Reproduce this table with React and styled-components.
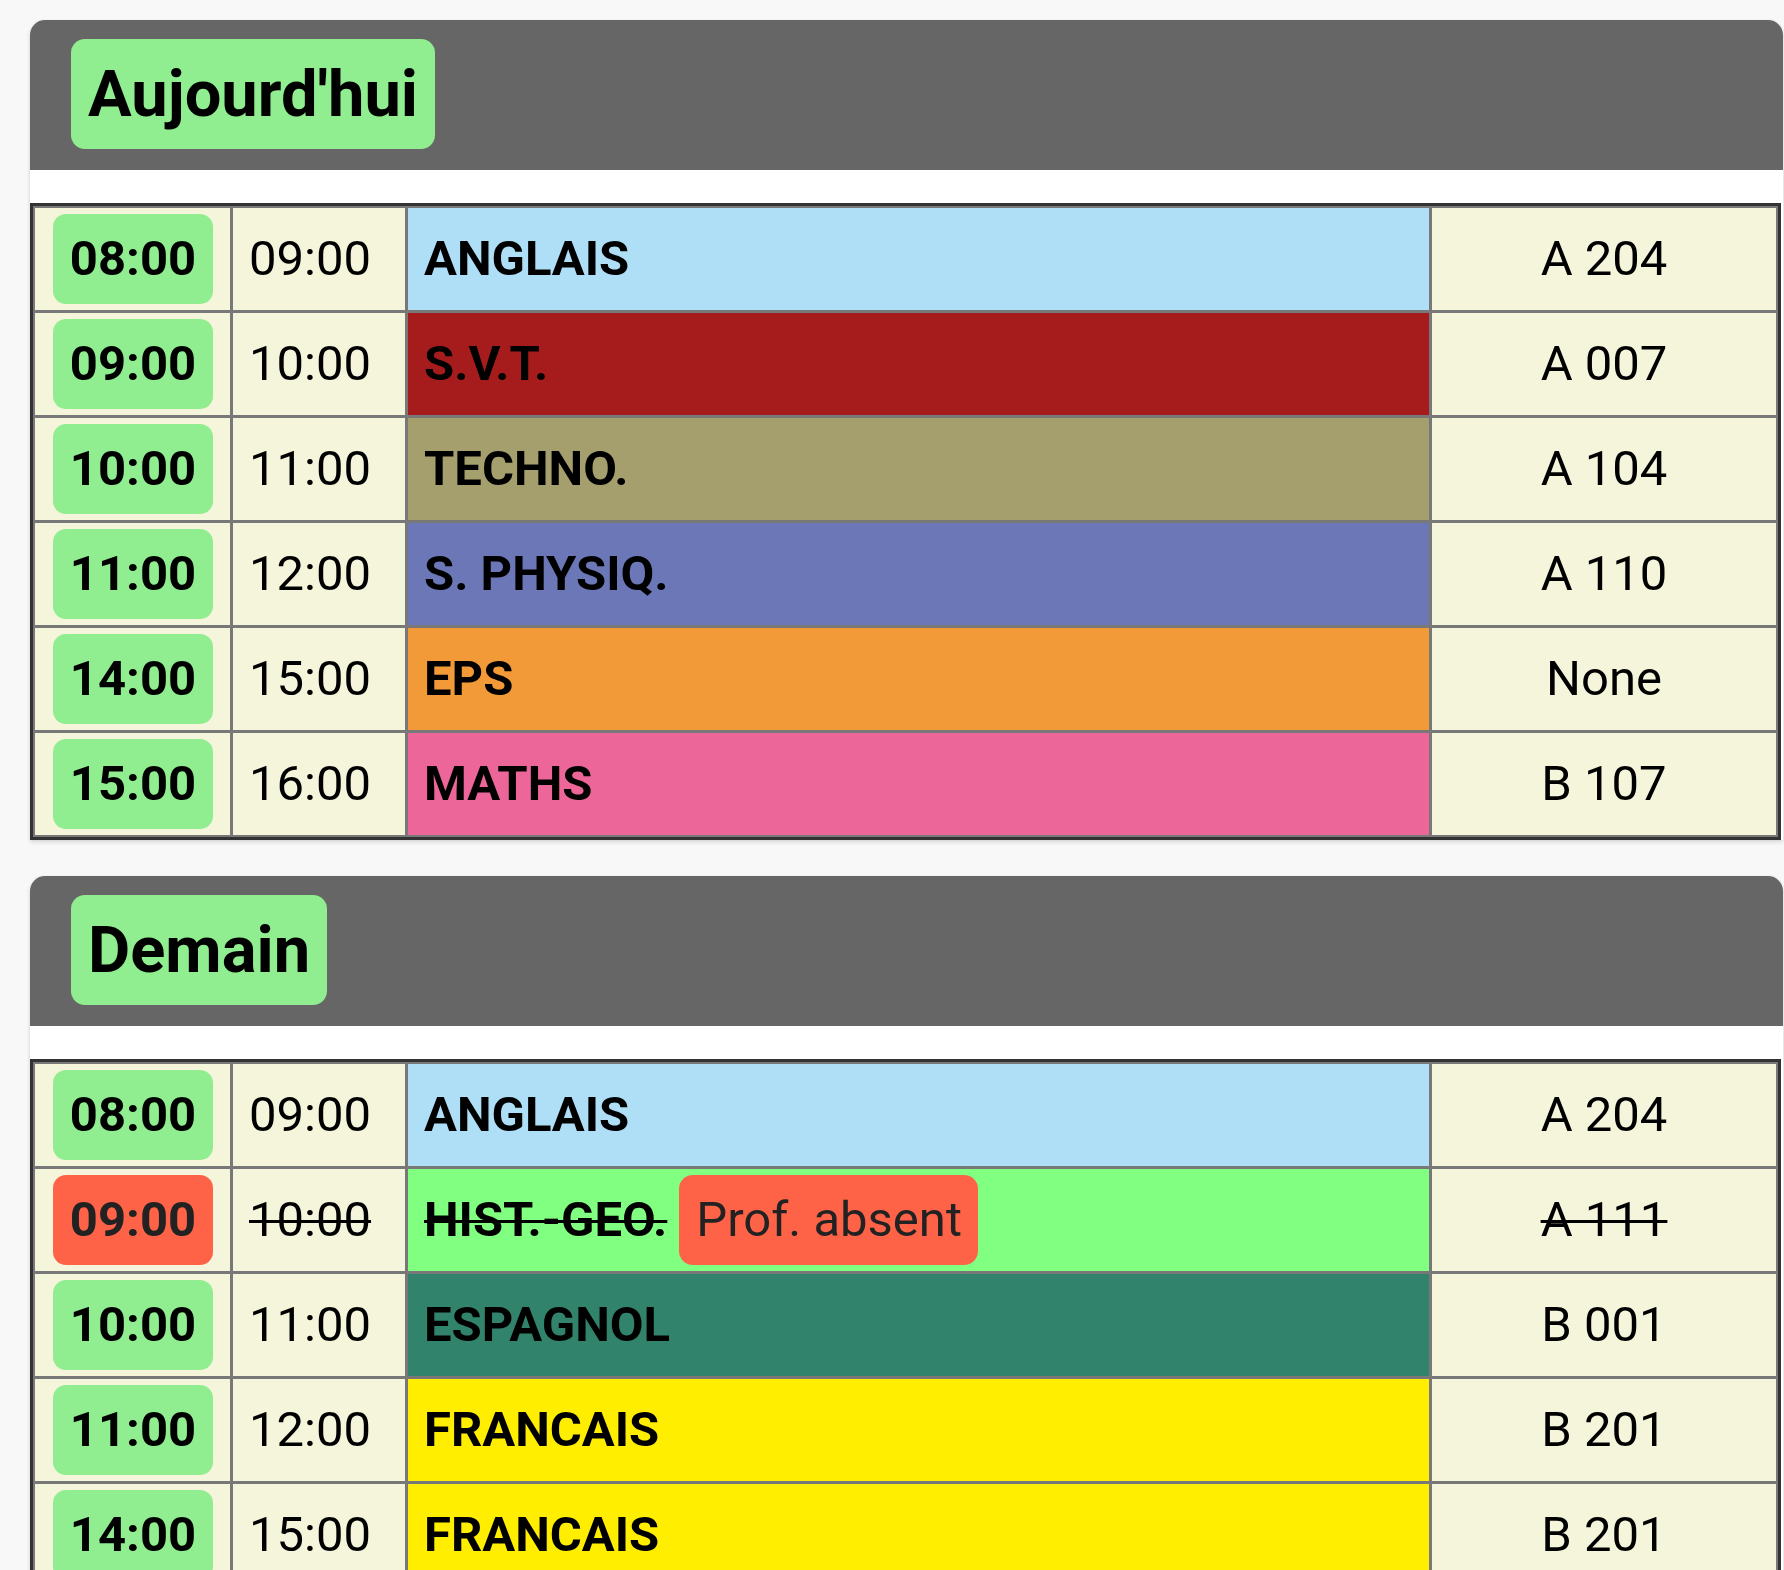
import React from "react";
import styled, { createGlobalStyle } from "styled-components";

const GlobalStyle = createGlobalStyle`
  html, body {
    margin: 0;
    padding: 0;
    background: #f8f8f8;
    font-family: Roboto, "Liberation Sans", Arial, sans-serif;
    color: #000;
  }
`;

const Page = styled.div`
  display: flex;
  flex-direction: column;
  gap: 36px;
  padding: 20px 0 40px 30px;
`;

const Card = styled.section`
  width: 1753px;
  background: #fff;
  border-radius: 15px 15px 0 0;
  box-shadow: 0 2px 4px rgba(0, 0, 0, 0.14), 0 0 2px rgba(0, 0, 0, 0.06);
  display: flex;
  flex-direction: column;
  gap: 33px;
`;

const Header = styled.header`
  height: 150px;
  box-sizing: border-box;
  background: #666666;
  border-radius: 15px 15px 0 0;
  padding: 19px 41px;
  display: flex;
  align-items: flex-start;
`;

const DayLabel = styled.h2`
  margin: 0;
  background: #90ee90;
  border-radius: 14px;
  padding: 17px 17px;
  font-size: 65px;
  line-height: 76px;
  font-weight: 700;
  color: #000;
`;

const Table = styled.div`
  display: grid;
  grid-template-columns: 195px 172px 1fr 344px;
  gap: 3px;
  padding: 2px;
  background: #787878;
  border: 3px solid #333;
  margin-right: 2px;
`;

const Cell = styled.div`
  background: ${(p) => p.$bg || "#f5f5dc"};
  padding: 6px 16px;
  display: flex;
  align-items: center;
  justify-content: ${(p) => (p.$center ? "center" : "flex-start")};
  gap: 12px;
  min-height: 90px;
  font-size: 49px;
  line-height: 56px;
  font-weight: ${(p) => (p.$bold ? 700 : 400)};
  text-decoration: ${(p) => (p.$struck ? "line-through" : "none")};
  text-decoration-thickness: 3px;
  color: #000;
  white-space: nowrap;
`;

const TimeBadge = styled.span`
  width: 160px;
  height: 90px;
  margin-left: 2px;
  box-sizing: border-box;
  display: flex;
  align-items: center;
  justify-content: center;
  border-radius: 13px;
  background: ${(p) => (p.$cancelled ? "#ff6347" : "#90ee90")};
  color: ${(p) => (p.$cancelled ? "#222" : "#000")};
  font-size: 49px;
  font-weight: 700;
`;

const SubjectName = styled.span`
  text-decoration: ${(p) => (p.$struck ? "line-through" : "none")};
  text-decoration-thickness: 3px;
`;

const Note = styled.span`
  background: #ff6347;
  border-radius: 14px;
  height: 90px;
  display: flex;
  align-items: center;
  padding: 0 16px 0 17px;
  font-weight: 400;
  color: #222;
  text-decoration: none;
`;

const today = [
  { start: "08:00", end: "09:00", subject: "ANGLAIS", color: "#afdff7", room: "A 204" },
  { start: "09:00", end: "10:00", subject: "S.V.T.", color: "#a61c1c", room: "A 007" },
  { start: "10:00", end: "11:00", subject: "TECHNO.", color: "#a59f6e", room: "A 104" },
  { start: "11:00", end: "12:00", subject: "S. PHYSIQ.", color: "#6b77b6", room: "A 110" },
  { start: "14:00", end: "15:00", subject: "EPS", color: "#f39a38", room: "None" },
  { start: "15:00", end: "16:00", subject: "MATHS", color: "#ec6699", room: "B 107" },
];

const tomorrow = [
  { start: "08:00", end: "09:00", subject: "ANGLAIS", color: "#afdff7", room: "A 204" },
  {
    start: "09:00",
    end: "10:00",
    subject: "HIST.-GEO.",
    color: "#80ff80",
    room: "A 111",
    cancelled: true,
    note: "Prof. absent",
  },
  { start: "10:00", end: "11:00", subject: "ESPAGNOL", color: "#31846b", room: "B 001" },
  { start: "11:00", end: "12:00", subject: "FRANCAIS", color: "#ffee00", room: "B 201" },
  { start: "14:00", end: "15:00", subject: "FRANCAIS", color: "#ffee00", room: "B 201" },
];

function DayCard({ title, lessons }) {
  return (
    <Card>
      <Header>
        <DayLabel>{title}</DayLabel>
      </Header>
      <Table>
        {lessons.map((l, i) => (
          <React.Fragment key={i}>
            <Cell>
              <TimeBadge $cancelled={l.cancelled}>{l.start}</TimeBadge>
            </Cell>
            <Cell $struck={l.cancelled}>{l.end}</Cell>
            <Cell $bg={l.color} $bold>
              <SubjectName $struck={l.cancelled}>{l.subject}</SubjectName>
              {l.note && <Note>{l.note}</Note>}
            </Cell>
            <Cell $center $struck={l.cancelled}>
              {l.room}
            </Cell>
          </React.Fragment>
        ))}
      </Table>
    </Card>
  );
}

export default function App() {
  return (
    <>
      <GlobalStyle />
      <Page>
        <DayCard title="Aujourd'hui" lessons={today} />
        <DayCard title="Demain" lessons={tomorrow} />
      </Page>
    </>
  );
}
